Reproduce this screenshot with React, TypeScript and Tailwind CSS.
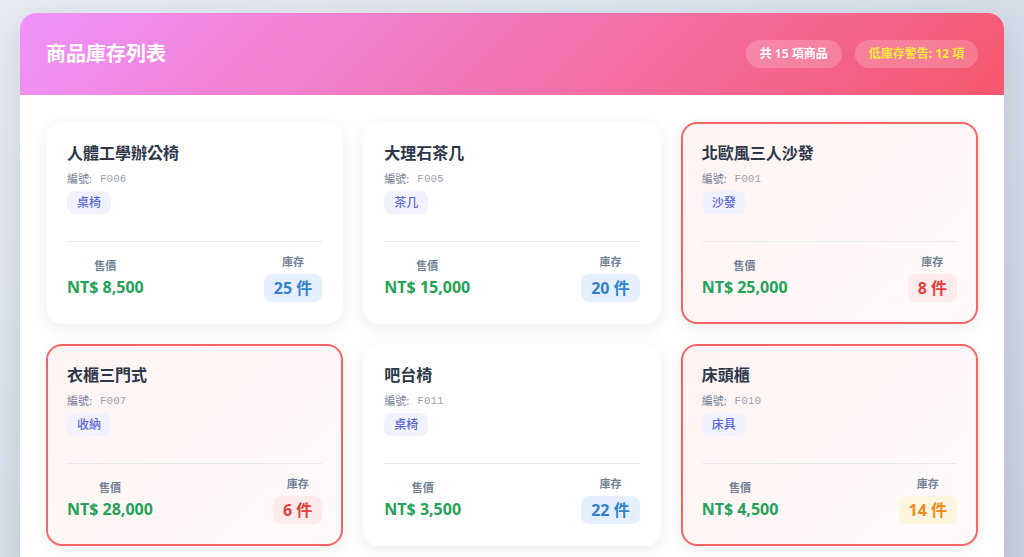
const products = [
  { name: "人體工學辦公椅", code: "F006", category: "桌椅", price: 8500, stock: 25 },
  { name: "大理石茶几", code: "F005", category: "茶几", price: 15000, stock: 20 },
  { name: "北歐風三人沙發", code: "F001", category: "沙發", price: 25000, stock: 8 },
  { name: "衣櫃三門式", code: "F007", category: "收納", price: 28000, stock: 6 },
  { name: "吧台椅", code: "F011", category: "桌椅", price: 3500, stock: 22 },
  { name: "床頭櫃", code: "F010", category: "床具", price: 4500, stock: 14 },
]

function stockStyle(stock: number) {
  if (stock < 10) return "bg-[#fdeaea] text-[#e53e3e]"
  if (stock < 15) return "bg-[#fef5de] text-[#ed8a1f]"
  return "bg-[#e5effd] text-[#3182ce]"
}

function ProductCard({ p }: { p: (typeof products)[number] }) {
  const low = p.stock < 15
  return (
    <div
      className={`flex flex-col rounded-2xl border-2 p-[19px] pb-[20px] shadow-[0_4px_16px_rgba(0,0,0,0.07)] ${
        low
          ? "border-[#f56565] bg-[linear-gradient(135deg,#fff3f3_0%,#fffafa_100%)]"
          : "border-transparent bg-white"
      }`}
    >
      <h3 className="text-base font-bold leading-[20px] text-[#2d3748]">{p.name}</h3>
      <div className="mt-[7px] flex items-center text-[11px] leading-[18px] text-[#718096]">
        <span>編號:</span>
        <span className="ml-[8px] font-['Liberation_Mono',monospace] text-[#9ca3af]">{p.code}</span>
      </div>
      <div className="mt-[1px]">
        <span className="inline-block rounded-lg bg-[#f0f2ff] px-2.5 py-[3px] text-xs font-medium leading-[17px] text-[#5a67d8]">
          {p.category}
        </span>
      </div>
      <div className="mt-[27px] flex items-center justify-between border-t border-[#e6ebf0] pt-[11px]">
        <div className="text-center">
          <p className="text-[11px] font-semibold leading-[18px] text-[#718096]">售價</p>
          <p className="text-base font-bold leading-[24px] text-[#22a357]">
            NT$ {p.price.toLocaleString("en-US")}
          </p>
        </div>
        <div className="flex flex-col items-center">
          <p className="text-[11px] font-semibold leading-[18px] text-[#718096]">庫存</p>
          <span className={`mt-[3px] rounded-lg px-2.5 py-[2px] text-base font-bold leading-[24px] ${stockStyle(p.stock)}`}>
            {p.stock} 件
          </span>
        </div>
      </div>
    </div>
  )
}

export default function App() {
  return (
    <div className="min-h-screen bg-gradient-to-br from-[#e6eaf1] to-[#c5cfe0] px-5 pt-[13px] pb-5 font-['Noto_Sans','Noto_Sans_CJK_TC',sans-serif]">
      <div className="overflow-hidden rounded-2xl bg-white shadow-[0_10px_30px_rgba(0,0,0,0.1)]">
        <div className="flex h-[82px] items-center justify-between bg-[linear-gradient(135deg,#f093fb_0%,#f5576c_100%)] px-[26px]">
          <h1 className="text-xl font-bold text-white">商品庫存列表</h1>
          <div className="flex items-center gap-[13px]">
            <span className="rounded-full bg-white/20 px-[14px] py-[5px] text-xs font-semibold leading-[18px] text-white">
              共 15 項商品
            </span>
            <span className="rounded-full bg-white/20 px-[14px] py-[5px] text-xs font-bold leading-[18px] text-[#ffeb3b]">
              低庫存警告: 12 項
            </span>
          </div>
        </div>
        <div className="grid grid-cols-3 gap-5 p-[26px] pt-[27px]">
          {products.map((p) => (
            <ProductCard key={p.code} p={p} />
          ))}
        </div>
      </div>
    </div>
  )
}
